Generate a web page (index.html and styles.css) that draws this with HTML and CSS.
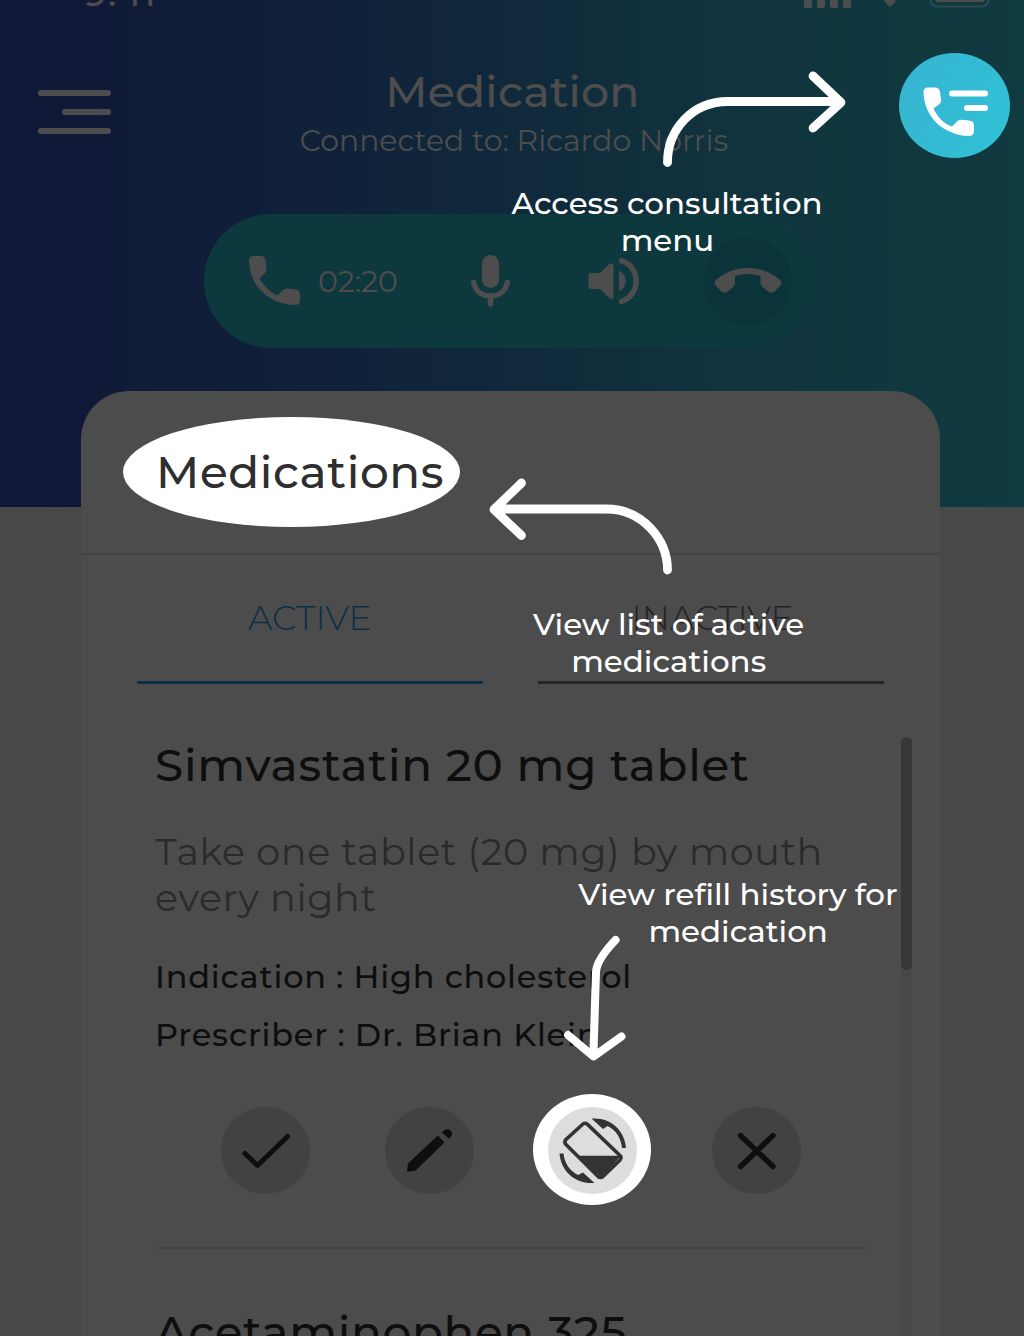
FILE: index.html
```html
<!DOCTYPE html>
<html lang="en">
<head>
<meta charset="utf-8">
<title>Medication</title>
<link rel="stylesheet" href="styles.css">
</head>
<body>
<main class="screen">
  <header class="header">
    <div class="status">
      <span class="status-time"><span class="t">9:41</span></span>
      <svg class="status-icons" width="190" height="12" viewBox="0 0 190 12">
        <g fill="#4d4d4d">
          <rect x="4" y="-12" width="8" height="20" rx="2"/><rect x="17" y="-12" width="8" height="20" rx="2"/><rect x="30" y="-12" width="8" height="20" rx="2"/><rect x="43" y="-12" width="8" height="20" rx="2"/>
          <path d="M84 1 90 7 96 1 90-4Z"/>
          <rect x="135" y="-12" width="50" height="14" rx="3"/>
        </g>
        <rect x="130.500" y="-20" width="58" height="26.500" rx="7" fill="none" stroke="#2a4a4e" stroke-width="2"/>
      </svg>
    </div>
    <div class="nav">
      <div class="menu"><i></i><i></i><i></i></div>
      <div class="titles">
        <h1 class="title"><span class="t">Medication</span></h1>
        <p class="subtitle"><span class="t">Connected to: Ricardo Norris</span></p>
      </div>
      <div class="consult">
        <svg width="111" height="105" viewBox="0 0 111 105">
          <path fill="#fff" d="M29 34.500H36Q40.500 34.500 41 39L42 46Q42.500 49.500 40 51.500L34.500 55.500C38 63 44 70.500 53 73.500L57.500 69Q59.500 66.500 62.500 66.700L70 67.500Q75 68 75 72.500V78Q75 83 69.500 83C45 82 25.500 65 24.500 39.500Q24.500 34.500 29 34.500Z"/>
          <path stroke="#fff" stroke-width="6" stroke-linecap="round" d="M53 40.500H86M68 55H86"/>
        </svg>
      </div>
    </div>
    <div class="callbar">
      <svg class="ic-phone" width="52" height="50" viewBox="0 0 52 50"><path fill="#4d4d4d" d="M5 0H12Q16 0 16.500 4.500L17.500 12Q18 15.500 15.500 17.500L10.500 22.500C14.500 29.500 20.500 35.500 28.500 39.500L33.500 34.500Q35.500 32.300 38.500 32.500L46.500 33.300Q51 34 51 38V44Q51 49 46 49C20 48 1 31 0 5Q0 0 5 0Z"/></svg>
      <span class="timer"><span class="t">02:20</span></span>
      <svg class="ic-mic" width="39" height="52" viewBox="0 0 39 52"><rect x="11" y="0" width="17" height="33" rx="8.500" fill="#4d4d4d"/><path d="M2.700 27.500C4.500 36 11 41 19.500 41S34.500 36 36.300 27.500M19.500 41V49" fill="none" stroke="#4d4d4d" stroke-width="5.500" stroke-linecap="round"/></svg>
      <svg class="ic-speaker" width="52" height="46" viewBox="0 0 52 46"><path fill="#4d4d4d" d="M3 15H12L21 6.500Q25.500 3.500 25.500 8V38Q25.500 43 21.500 40L12 31H3Q.5 31 .5 28.500V17.500Q.5 15 3 15ZM31 12.500C40 17 40 29 31 33.500Z"/><path d="M33.500 2.700C53 9 53 37 33.500 43.300" fill="none" stroke="#4d4d4d" stroke-width="5.500" stroke-linecap="round"/></svg>
      <div class="hangup">
        <svg width="68" height="26" viewBox="0 0 68 26"><path fill="#4d4d4d" d="M2 12C19-4 49-4 66 12Q68.500 15 66 18L61 23Q57.500 26 54 23.500L48.500 19Q46.500 17.500 46.500 14.500V8Q34 4 21 8V14.500Q21 17.500 19 19L14 23.500Q10.500 26 7 23L2 18Q-.5 15 2 12Z"/></svg>
      </div>
    </div>
  </header>

  <section class="card">
    <h2 class="card-title"><span class="t">Medications</span></h2>
    <nav class="tabs">
      <div class="tab active"><span class="t">ACTIVE</span></div>
      <div class="tab inactive"><span class="t">INACTIVE</span></div>
    </nav>
    <div class="body">
      <div class="list">
        <article class="med">
          <h3 class="drug"><span class="t">Simvastatin 20 mg tablet</span></h3>
          <p class="dose"><span class="t">Take one tablet (20 mg) by mouth</span><br><span class="t">every night</span></p>
          <p class="fact f1"><span class="t">Indication : High cholesterol</span></p>
          <p class="fact f2"><span class="t">Prescriber : Dr. Brian Klein</span></p>
          <div class="actions">
            <div class="action"><svg width="89" height="87" viewBox="0 0 89 87"><path d="M24 46.500 36.500 58.500 66.500 29.500" fill="none" stroke="#0e0e0e" stroke-width="5" stroke-linecap="round" stroke-linejoin="round"/></svg></div>
            <div class="action"><svg width="89" height="87" viewBox="0.500 0 89 87"><path fill="#0e0e0e" d="M22.500 65 23.500 56.500 53.300 28.500 60 35.500 31 63.500ZM57.500 25.500Q60.500 21.500 64.500 22.500 67.800 23.500 67.500 27.500 67 29.500 64.500 31.700Z"/></svg></div>
            <div class="action lit"><svg width="89" height="87" viewBox="0 0 89 87">
              <path d="M35 17 17.500 33Q16 35.500 18 37.500L50 69.500Q52.500 71.500 55 69.500L72 53Q74 50.500 72 48.500L39 17Q37 15.500 35 17Z" fill="none" stroke="#333" stroke-width="3.600"/>
              <path fill="#333" d="M29 48.800H73L53.500 70.500ZM43.500 11.500C63 10 77 24 78 41H74C73 31 68 23 59.500 19L55 22ZM11.500 46.500H15.500C16.500 56 21.500 63.500 30 68L35 65.500 46.500 76C27 77.500 13 64 11.500 46.500Z"/>
            </svg></div>
            <div class="action"><svg width="89" height="87" viewBox="0 0 89 87"><path d="M28.500 28.500 61 59.500M61 28.500 28.500 59.500" fill="none" stroke="#0e0e0e" stroke-width="5.400" stroke-linecap="round"/></svg></div>
          </div>
        </article>
        <article class="med next">
          <h3 class="drug aceta"><span class="t">Acetaminophen 325</span></h3>
        </article>
      </div>
      <div class="scroll"><div class="thumb"></div></div>
    </div>
  </section>

  <svg class="arrows" width="1024" height="1336" viewBox="0 0 1024 1336" fill="none" stroke="#fff" stroke-linecap="round" stroke-linejoin="round">
    <g stroke-width="8.800">
      <path d="M667.500 162.500C667.500 130 692 101.500 728 101.500H838M813 76 841 102.500 813 128"/>
      <path d="M667.500 570C667.500 540 643 509 606 509H498M521.500 483 494 509.500 521.500 535.500"/>
      <path stroke-width="8" d="M615.500 940C605 951 596.500 962 596 972L593.500 1051M568 1035 593.500 1056.500 621.500 1036.500"/>
    </g>
  </svg>
  <p class="tip tip-consult"><span class="t">Access consultation</span><br><span class="t">menu</span></p>
  <p class="tip tip-list"><span class="t">View list of active</span><br><span class="t">medications</span></p>
  <p class="tip tip-refill"><span class="t">View refill history for</span><br><span class="t">medication</span></p>
</main>
</body>
</html>
```
FILE: styles.css
```css
* { box-sizing: border-box; margin: 0; padding: 0; }
body { background: #484848; font-family: Montserrat, Inter, "Liberation Sans", sans-serif; }
.screen { position: relative; width: 1024px; height: 1336px; overflow: hidden; background: #484848; }
/* slightly widened letterforms */
.t { display: inline-block; white-space: nowrap; transform: scaleX(1.03); transform-origin: 0 50%; }
svg { display: block; }

.header { height: 507px; background: linear-gradient(90deg, #101737 0%, #10243a 40%, #10333d 70%, #103b40 100%); color: #4d4d4d; }
.status { display: flex; justify-content: space-between; align-items: flex-end; height: 12px; padding: 0 34px 0 84px; }
.status-time { font-size: 36px; line-height: 37px; font-weight: 500; letter-spacing: 1px; }
.nav { display: grid; grid-template-columns: 200px 1fr 200px; height: 105px; margin-top: 41px; }
.menu { display: flex; flex-direction: column; gap: 12.500px; padding: 36.500px 0 0 38px; }
.menu i { width: 72.500px; height: 6.500px; border-radius: 4px; background: #4d4d4d; }
.menu i:nth-child(2) { width: 48.500px; margin-left: 24px; }
.titles { text-align: center; white-space: nowrap; }
.titles .t { transform-origin: 50% 50%; }
.title { padding-top: 14px; font-size: 43px; font-weight: 500; line-height: 50px; letter-spacing: .15px; }
.subtitle { padding: 7px 0 0 3px; font-size: 29px; font-weight: 400; line-height: 34px; }
.consult { width: 111px; height: 105px; margin-left: 75px; border-radius: 50%; background: linear-gradient(110deg, #37b4d1, #30c2d6); }
.callbar { display: flex; align-items: center; width: 614px; height: 134px; margin: 56px 0 0 204px; padding: 0 26px 0 45px; border-radius: 67px; background: #0d383d; }
.timer { width: 78px; margin-left: 17px; font-size: 29px; font-weight: 400; }
.ic-mic { margin-left: 75px; }
.ic-speaker { margin-left: 78px; }
.hangup { display: grid; place-items: center; width: 89px; height: 87px; margin-left: auto; border-radius: 50%; background: #0a3439; }

.card { position: relative; width: 859px; height: 960px; margin: -116px 0 0 81px; border-radius: 48px 48px 0 0; background: #4c4c4c; color: #0e0e0e; }
.card-title { display: flex; align-items: center; height: 164px; padding: 0 0 1px 74.500px; border-bottom: 2px solid #434343; font-size: 44px; font-weight: 500; letter-spacing: .6px; color: #2e2e2e; }
.card-title .t { position: relative; }
/* ellipse that spotlights the title */
.card-title::before { content: ""; position: absolute; left: 42px; top: 26px; width: 337px; height: 110px; border-radius: 50%; background: #fff; }
.tabs { display: flex; gap: 55.500px; padding-left: 56px; }
.tab { width: 345.500px; height: 129px; padding-top: 42px; border-bottom: 3px solid; text-align: center; font-size: 34px; line-height: 42px; font-weight: 300; }
.tab .t { transform: scaleX(1.018); transform-origin: 50% 50%; }
.active { color: #0c2f48; border-color: #0c3049; }
.inactive { padding-left: 3px; color: #232323; border-color: #262626; }
.body { display: flex; padding: 52px 28px 0 74px; }
.list { width: 711px; }
.drug { padding-top: 1px; font-size: 44px; font-weight: 500; line-height: 56px; letter-spacing: .73px; }
.aceta { letter-spacing: .6px; }
.dose { margin-top: 35.500px; font-size: 37px; font-weight: 400; line-height: 46.500px; letter-spacing: .6px; color: #2a2a2a; }
.fact { font-size: 31px; font-weight: 500; line-height: 40px; letter-spacing: .77px; }
.f1 { margin-top: 35.500px; }
.f2 { margin-top: 17.500px; }
.actions { display: flex; gap: 74.500px; margin: 52px 0 0 66px; }
.action { width: 89px; height: 87px; border-radius: 50%; background: #424242; }
.lit { position: relative; isolation: isolate; background: none; }
.lit::before, .lit::after { content: ""; position: absolute; border-radius: 50%; }
.lit::before { z-index: -2; inset: -13px -14px -11px -15px; background: #fff; }
.lit::after { z-index: -1; inset: 0; background: #ddd; }
.next { margin-top: 53px; padding-top: 54px; border-top: 2px solid #444; }
.scroll { width: 11px; height: 700px; margin: 1px 0 0 auto; border-radius: 6px; background: #484848; }
.thumb { height: 233px; border-radius: 6px; background: #373737; }

.arrows { position: absolute; left: 0; top: 0; }
.tip { position: absolute; color: #fff; font-size: 30px; font-weight: 500; line-height: 36.500px; text-align: center; white-space: nowrap; }
.tip .t { transform-origin: 50% 50%; }
.tip-consult { left: 513px; top: 186px; width: 309px; }
.tip-list { left: 534px; top: 607px; width: 269px; }
.tip-refill { left: 578px; top: 877px; width: 321px; }
```
